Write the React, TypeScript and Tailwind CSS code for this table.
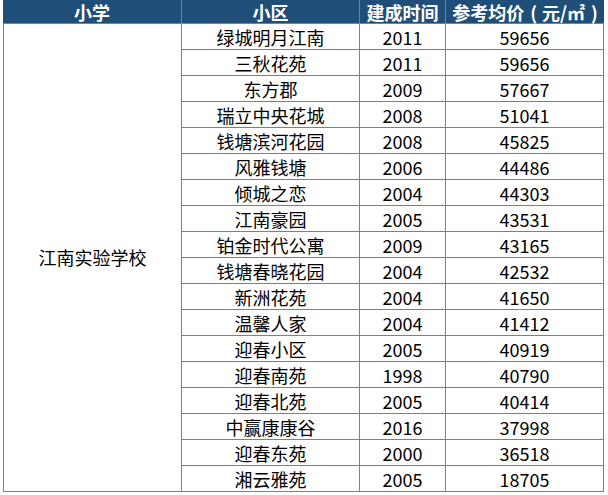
import React from "react";

const rows: [string, string, string][] = [
  ["绿城明月江南", "2011", "59656"],
  ["三秋花苑", "2011", "59656"],
  ["东方郡", "2009", "57667"],
  ["瑞立中央花城", "2008", "51041"],
  ["钱塘滨河花园", "2008", "45825"],
  ["风雅钱塘", "2006", "44486"],
  ["倾城之恋", "2004", "44303"],
  ["江南豪园", "2005", "43531"],
  ["铂金时代公寓", "2009", "43165"],
  ["钱塘春晓花园", "2004", "42532"],
  ["新洲花苑", "2004", "41650"],
  ["温馨人家", "2004", "41412"],
  ["迎春小区", "2005", "40919"],
  ["迎春南苑", "1998", "40790"],
  ["迎春北苑", "2005", "40414"],
  ["中赢康康谷", "2016", "37998"],
  ["迎春东苑", "2000", "36518"],
  ["湘云雅苑", "2005", "18705"],
];

export default function App() {
  const font = { fontFamily: '"Noto Sans CJK SC", "Noto Sans", sans-serif' };
  return (
    <div className="w-[608px] h-[495px] bg-white" style={font}>
      <div className="ml-[3px] w-[601px] bg-[#808080] px-px pb-px grid grid-cols-[177px_177px_85px_157px] grid-rows-[23px_repeat(18,25px)] gap-px">
        <div className="bg-[#1f4e79] -ml-px text-white font-bold text-[18px] leading-none flex items-center justify-center">小学</div>
        <div className="bg-[#1f4e79] text-white font-bold text-[18px] leading-none flex items-center justify-center">小区</div>
        <div className="bg-[#1f4e79] text-white font-bold text-[18px] leading-none flex items-center justify-center whitespace-nowrap">建成时间</div>
        <div className="bg-[#1f4e79] -mr-px text-white font-bold text-[18px] leading-none flex items-center justify-center whitespace-nowrap">
          <span>参考均价</span>
          <span className="ml-[6px] mr-[5px]">(</span>
          <span>元/㎡</span>
          <span className="ml-[6px]">)</span>
        </div>
        <div className="bg-white row-span-18 flex items-center justify-center text-[18px] text-black">江南实验学校</div>
        {rows.map(([name, year, price]) => (
          <React.Fragment key={name}>
            <div className="bg-white flex items-center justify-center text-[18px] leading-none text-black whitespace-nowrap">{name}</div>
            <div className="bg-white flex items-center justify-center text-[18px] leading-none text-black">{year}</div>
            <div className="bg-white flex items-center justify-center text-[18px] leading-none text-black">{price}</div>
          </React.Fragment>
        ))}
      </div>
    </div>
  );
}
